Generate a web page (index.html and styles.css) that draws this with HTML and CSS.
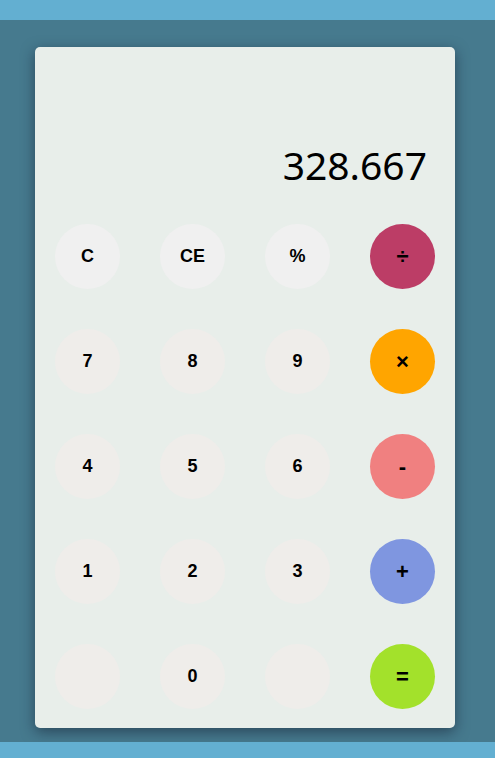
FILE: index.html
```html
<!DOCTYPE html>
<html lang="en">
<head>
<meta charset="utf-8">
<title>Calculator</title>
<link rel="stylesheet" href="styles.css">
</head>
<body>
<div class="topbar"></div>
<main class="stage">
  <div class="calc">
    <div class="display"><span class="value">328.667</span></div>
    <div class="keys">
      <button class="key fn">C</button>
      <button class="key fn">CE</button>
      <button class="key fn">%</button>
      <button class="key op div">÷</button>
      <button class="key">7</button>
      <button class="key">8</button>
      <button class="key">9</button>
      <button class="key op mul">×</button>
      <button class="key">4</button>
      <button class="key">5</button>
      <button class="key">6</button>
      <button class="key op sub">-</button>
      <button class="key">1</button>
      <button class="key">2</button>
      <button class="key">3</button>
      <button class="key op add">+</button>
      <button class="key"></button>
      <button class="key">0</button>
      <button class="key"></button>
      <button class="key op eq">=</button>
    </div>
  </div>
</main>
<div class="bottombar"></div>
</body>
</html>
```
FILE: styles.css
```css
html, body {
  margin: 0;
  padding: 0;
}
body {
  background: #62aecf;
  width: 495px;
  height: 758px;
  overflow: hidden;
}
.topbar {
  height: 20px;
  background: #63afd1;
}
.stage {
  height: 722px;
  background: #467a8e;
  padding: 27px 40px 0 35px;
  box-sizing: border-box;
}
.calc {
  width: 420px;
  height: 681px;
  box-sizing: border-box;
  background: #e8eeea;
  border-radius: 5px;
  box-shadow: 0 4px 14px rgba(20, 30, 50, 0.55);
  padding: 20px;
}
.display {
  height: 117px;
  margin-bottom: 40px;
  display: flex;
  align-items: flex-end;
  justify-content: flex-end;
  padding-right: 8px;
}
.value {
  font-family: "Noto Sans", "Open Sans", sans-serif;
  font-size: 39px;
  line-height: 1;
  color: #000;
}
.keys {
  display: grid;
  grid-template-columns: repeat(4, 65px);
  grid-auto-rows: 65px;
  column-gap: 40px;
  row-gap: 40px;
}
.key {
  width: 65px;
  height: 65px;
  border: none;
  border-radius: 50%;
  padding: 0;
  margin: 0;
  background: #efedea;
  font-family: "Liberation Sans", Arial, sans-serif;
  font-weight: bold;
  font-size: 18px;
  color: #000;
  display: flex;
  align-items: center;
  justify-content: center;
}
.key.fn {
  background: #f0f0f0;
}
.key.op {
  font-size: 22px;
}
.div { background: #bc3d66; }
.mul { background: #ffa500; }
.sub { background: #f08080; }
.add { background: #7f96e0; }
.eq  { background: #a3e12b; }
.bottombar {
  height: 16px;
  background: #63afd1;
}
```
